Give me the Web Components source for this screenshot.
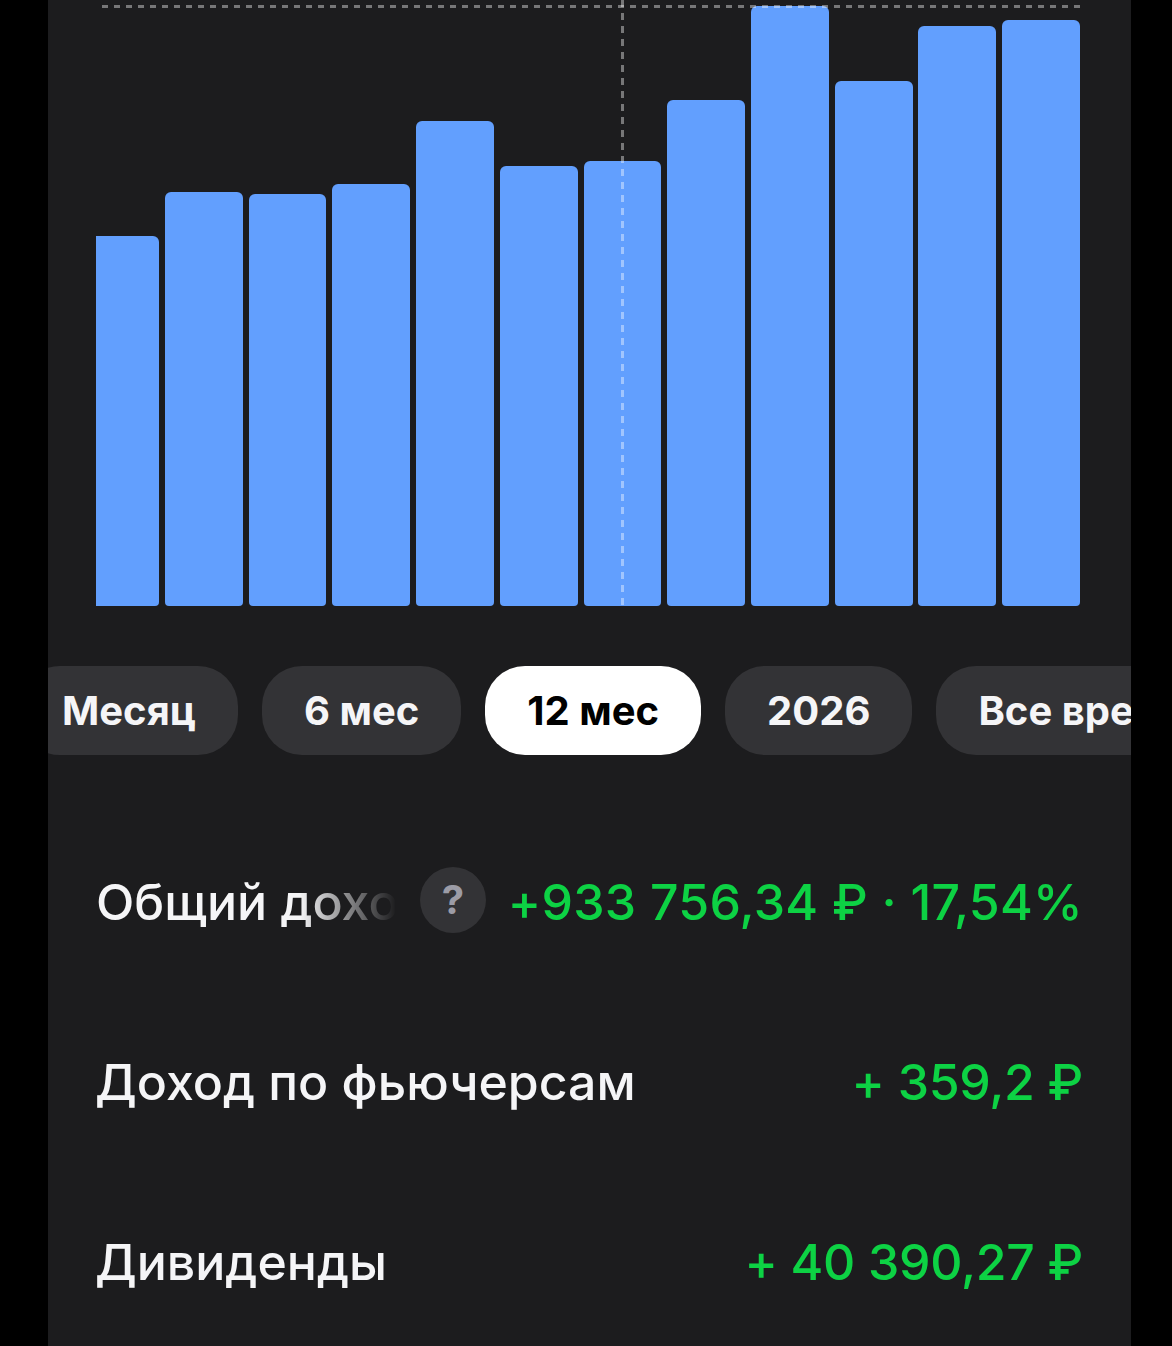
<!doctype html>
<html lang="ru">
<head>
<meta charset="utf-8">
<title>Доход</title>
<style>
  html, body { margin: 0; height: 100%; background: #000; }
  body { font-family: Inter, "Noto Sans", sans-serif; overflow: hidden; }
</style>
</head>
<body>
<income-screen>
  <bar-chart bars="370,414,412,422,485,440,445,506,600,525,580,586"></bar-chart>
  <period-chips>
    <period-chip>Месяц</period-chip>
    <period-chip>6 мес</period-chip>
    <period-chip active>12 мес</period-chip>
    <period-chip>2026</period-chip>
    <period-chip>Все время</period-chip>
  </period-chips>
  <stat-row label="Общий доход" hint value="+933 756,34 ₽ · 17,54%"></stat-row>
  <stat-row label="Доход по фьючерсам" value="+ 359,2 ₽"></stat-row>
  <stat-row label="Дивиденды" value="+ 40 390,27 ₽"></stat-row>
</income-screen>

<script>
const defineElement = (name, markup, observe) => {
  const template = document.createElement('template')
  template.innerHTML = markup

  customElements.define(name, class extends HTMLElement {
    constructor() {
      super()
      this.attachShadow({ mode: 'open' }).appendChild(template.content.cloneNode(true))
    }

    connectedCallback() {
      if (observe) observe(this, this.shadowRoot)
    }
  })
}

defineElement('income-screen', `
  <style>
    :host { display: block; width: 1083px; height: 1346px; margin-left: 48px; background: #1c1c1e; overflow: hidden; }
  </style>
  <slot></slot>
`)

defineElement('bar-chart', `
  <style>
    :host { display: block; position: relative; height: 606px; margin: 0 51px 0 48px; }
    .bars { display: flex; align-items: flex-end; gap: 5.85px; height: 100%; }
    .bar { flex: 1 1 0; background: #629ffe; border-radius: 6px 6px 4px 4px; }
    .bar:first-child { flex: 0 0 63px; border-radius: 0 6px 4px 0; }
    .top-line, .cursor-line { position: absolute; }
    .top-line {
      left: 6px; right: 0; top: 4.5px; height: 3px;
      background: repeating-linear-gradient(90deg, rgba(255,255,255,.4) 0 6px, transparent 6px 12px);
    }
    .cursor-line {
      left: 524.5px; top: 0; bottom: 0; width: 3px;
      background: repeating-linear-gradient(180deg, rgba(255,255,255,.4) 0 7px, transparent 7px 13px);
    }
  </style>
  <div class="bars"></div>
  <div class="top-line"></div>
  <div class="cursor-line"></div>
`, (host, root) => {
  const bars = root.querySelector('.bars')

  host.getAttribute('bars').split(',').forEach(height => {
    const bar = document.createElement('div')
    bar.className = 'bar'
    bar.style.height = `${height}px`
    bars.appendChild(bar)
  })
})

defineElement('period-chips', `
  <style>
    :host { display: flex; gap: 24px; margin: 60px 0 0 -28px; width: max-content; }
  </style>
  <slot></slot>
`)

defineElement('period-chip', `
  <style>
    :host {
      display: flex; align-items: center; height: 89px; padding: 0 42px; border-radius: 40px;
      background: #333336; color: #f5f5f7;
      font: 700 40px/1 Inter, "Noto Sans", sans-serif; white-space: nowrap;
    }
    :host([active]) { background: #fff; color: #000; }
  </style>
  <slot></slot>
`)

defineElement('stat-row', `
  <style>
    :host {
      display: flex; align-items: center; height: 180px; margin: 0 48px 0 47px;
      font: 500 50px/1 Inter, "Noto Sans", sans-serif; color: #f5f5f7;
    }
    :host(:first-of-type) { margin-top: 57px; }
    .label { white-space: nowrap; }
    .value { margin-left: auto; color: #0dd244; white-space: nowrap; letter-spacing: -.3px; }
    .hint {
      flex: none; display: flex; align-items: center; justify-content: center;
      width: 66px; height: 66px; margin: -4px 0 0 24px; border-radius: 50%;
      background: #333336; color: #9c9ca6; font: 700 40px/1 Inter, sans-serif;
    }
    :host([hint]) .label {
      width: 300px; margin-left: 1px; overflow: hidden; flex: none;
      -webkit-mask-image: linear-gradient(90deg, #000 68%, transparent 100%);
      mask-image: linear-gradient(90deg, #000 68%, transparent 100%);
    }
    :host([hint]) .value { letter-spacing: .25px; }
  </style>
  <span class="label"></span>
  <span class="hint">?</span>
  <span class="value"></span>
`, (host, root) => {
  root.querySelector('.label').textContent = host.getAttribute('label')
  root.querySelector('.value').textContent = host.getAttribute('value')
  if (!host.hasAttribute('hint')) root.querySelector('.hint').remove()
})
</script>
</body>
</html>
